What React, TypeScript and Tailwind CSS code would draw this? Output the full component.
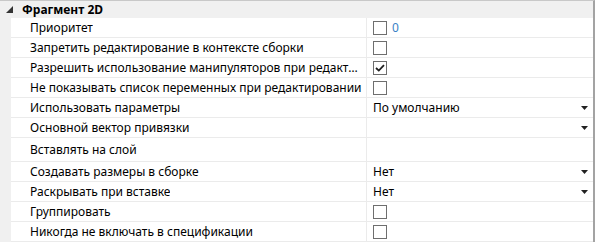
import React from 'react';

type RowKind = 'check' | 'select' | 'empty';

interface PropRow {
    label: string;
    kind: RowKind;
    checked?: boolean;
    value?: string;
    extra?: string;
    tall?: boolean;
}

const rows: PropRow[] = [
    { label: 'Приоритет', kind: 'check', extra: '0' },
    { label: 'Запретить редактирование в контексте сборки', kind: 'check' },
    { label: 'Разрешить использование манипуляторов при редактировании', kind: 'check', checked: true },
    { label: 'Не показывать список переменных при редактировании', kind: 'check' },
    { label: 'Использовать параметры', kind: 'select', value: 'По умолчанию' },
    { label: 'Основной вектор привязки', kind: 'select', value: '' },
    { label: 'Вставлять на слой', kind: 'empty', tall: true },
    { label: 'Создавать размеры в сборке', kind: 'select', value: 'Нет' },
    { label: 'Раскрывать при вставке', kind: 'select', value: 'Нет' },
    { label: 'Группировать', kind: 'check' },
    { label: 'Никогда не включать в спецификации', kind: 'check' },
];

const CheckBox: React.FC<{ checked?: boolean }> = ({ checked }) => (
    <div className="w-[14px] h-[14px] border border-[#6e6e6e] bg-white flex items-center justify-center shrink-0">
        {checked && (
            <svg width="10" height="8" viewBox="0 0 10 8">
                <path d="M1 4 L3.8 6.6 L9 1.2" fill="none" stroke="#1e1e1e" strokeWidth="1.8" />
            </svg>
        )}
    </div>
);

const Arrow = () => (
    <svg width="7" height="4" viewBox="0 0 7 4" className="ml-auto mr-[5px]">
        <path d="M0 0 H7 L3.5 4 Z" fill="#222" />
    </svg>
);

export default function App() {
    return (
        <div
            className="w-[595px] h-[242px] bg-white border-t border-[#c8c8c8] border-r-2 border-r-[#a3a3a3] overflow-hidden text-[12px] text-black"
            style={{ fontFamily: '"Noto Sans", "Liberation Sans", sans-serif' }}
        >
            <div className="h-[17px] bg-[#f0f0f0] flex items-center">
                <svg width="7" height="7" viewBox="0 0 7 7" className="ml-[6px]">
                    <path d="M7 0 V7 H0 Z" fill="#333" />
                </svg>
                <span className="ml-[9px] font-bold leading-none">Фрагмент 2D</span>
            </div>
            {rows.map((row) => (
                <div key={row.label} className={`flex ${row.tall ? 'h-[24px]' : 'h-[20px]'}`}>
                    <div className="w-[11px] bg-[#f0f0f0] shrink-0" />
                    <div className="w-[356px] shrink-0 min-w-0 border-b border-r border-[#ebebeb] pl-[19px] pr-[3px] flex items-center">
                        <span className="truncate">{row.label}</span>
                    </div>
                    <div className="flex-1 border-b border-[#ebebeb] pl-[6px] flex items-center">
                        {row.kind === 'check' && (
                            <>
                                <CheckBox checked={row.checked} />
                                {row.extra && <span className="ml-[5px] text-[#3a7fc6]">{row.extra}</span>}
                            </>
                        )}
                        {row.kind === 'select' && (
                            <>
                                <span>{row.value}</span>
                                <Arrow />
                            </>
                        )}
                    </div>
                </div>
            ))}
        </div>
    );
}
